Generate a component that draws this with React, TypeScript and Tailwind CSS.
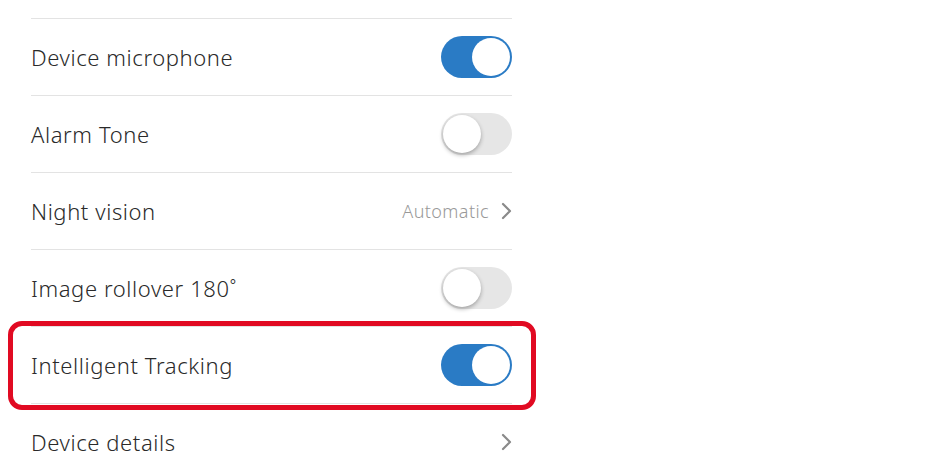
const font = { fontFamily: '"Noto Sans", "Liberation Sans", sans-serif' };

function Toggle({ on }: { on: boolean }) {
  return (
    <div
      className={`relative w-[71px] h-[42px] rounded-full ${
        on ? "bg-[#2a7bc5]" : "bg-[#e6e6e6]"
      }`}
    >
      <div
        className={`absolute top-[2px] w-[38px] h-[38px] rounded-full bg-white ${
          on ? "right-[2px]" : "left-[2px] shadow-[0_2px_4px_rgba(0,0,0,0.3)]"
        }`}
      />
    </div>
  );
}

function Chevron() {
  return (
    <svg width="11" height="18" viewBox="0 0 11 18" className="ml-[12px]">
      <path d="M2 2l7 7-7 7" fill="none" stroke="#8a8a8a" strokeWidth="2.2" strokeLinecap="round" strokeLinejoin="round" />
    </svg>
  );
}

function Row({
  label,
  children,
  highlight,
}: {
  label: string;
  children?: React.ReactNode;
  highlight?: boolean;
}) {
  return (
    <div className="relative flex items-center justify-between h-[77px] border-t border-[#e3e3e3]">
      <span className="text-[22px] font-light text-[#2a2a2a] tracking-[0.6px]">{label}</span>
      <div className="flex items-center">{children}</div>
      {highlight && (
        <div className="absolute left-[-23px] right-[-24px] top-[-6px] bottom-[-7px] border-[5px] border-[#e10a22] rounded-[14px]" />
      )}
    </div>
  );
}

export default function App() {
  return (
    <div className="w-[934px] h-[470px] bg-white overflow-hidden" style={font}>
      <div className="w-[481px] ml-[31px] pt-[18px]">
        <Row label="Device microphone">
          <Toggle on />
        </Row>
        <Row label="Alarm Tone">
          <Toggle on={false} />
        </Row>
        <Row label="Night vision">
          <span className="text-[18px] font-light text-[#999999] tracking-[0.4px]">Automatic</span>
          <Chevron />
        </Row>
        <Row label="Image rollover 180˚">
          <Toggle on={false} />
        </Row>
        <Row label="Intelligent Tracking" highlight>
          <Toggle on />
        </Row>
        <Row label="Device details">
          <Chevron />
        </Row>
      </div>
    </div>
  );
}
